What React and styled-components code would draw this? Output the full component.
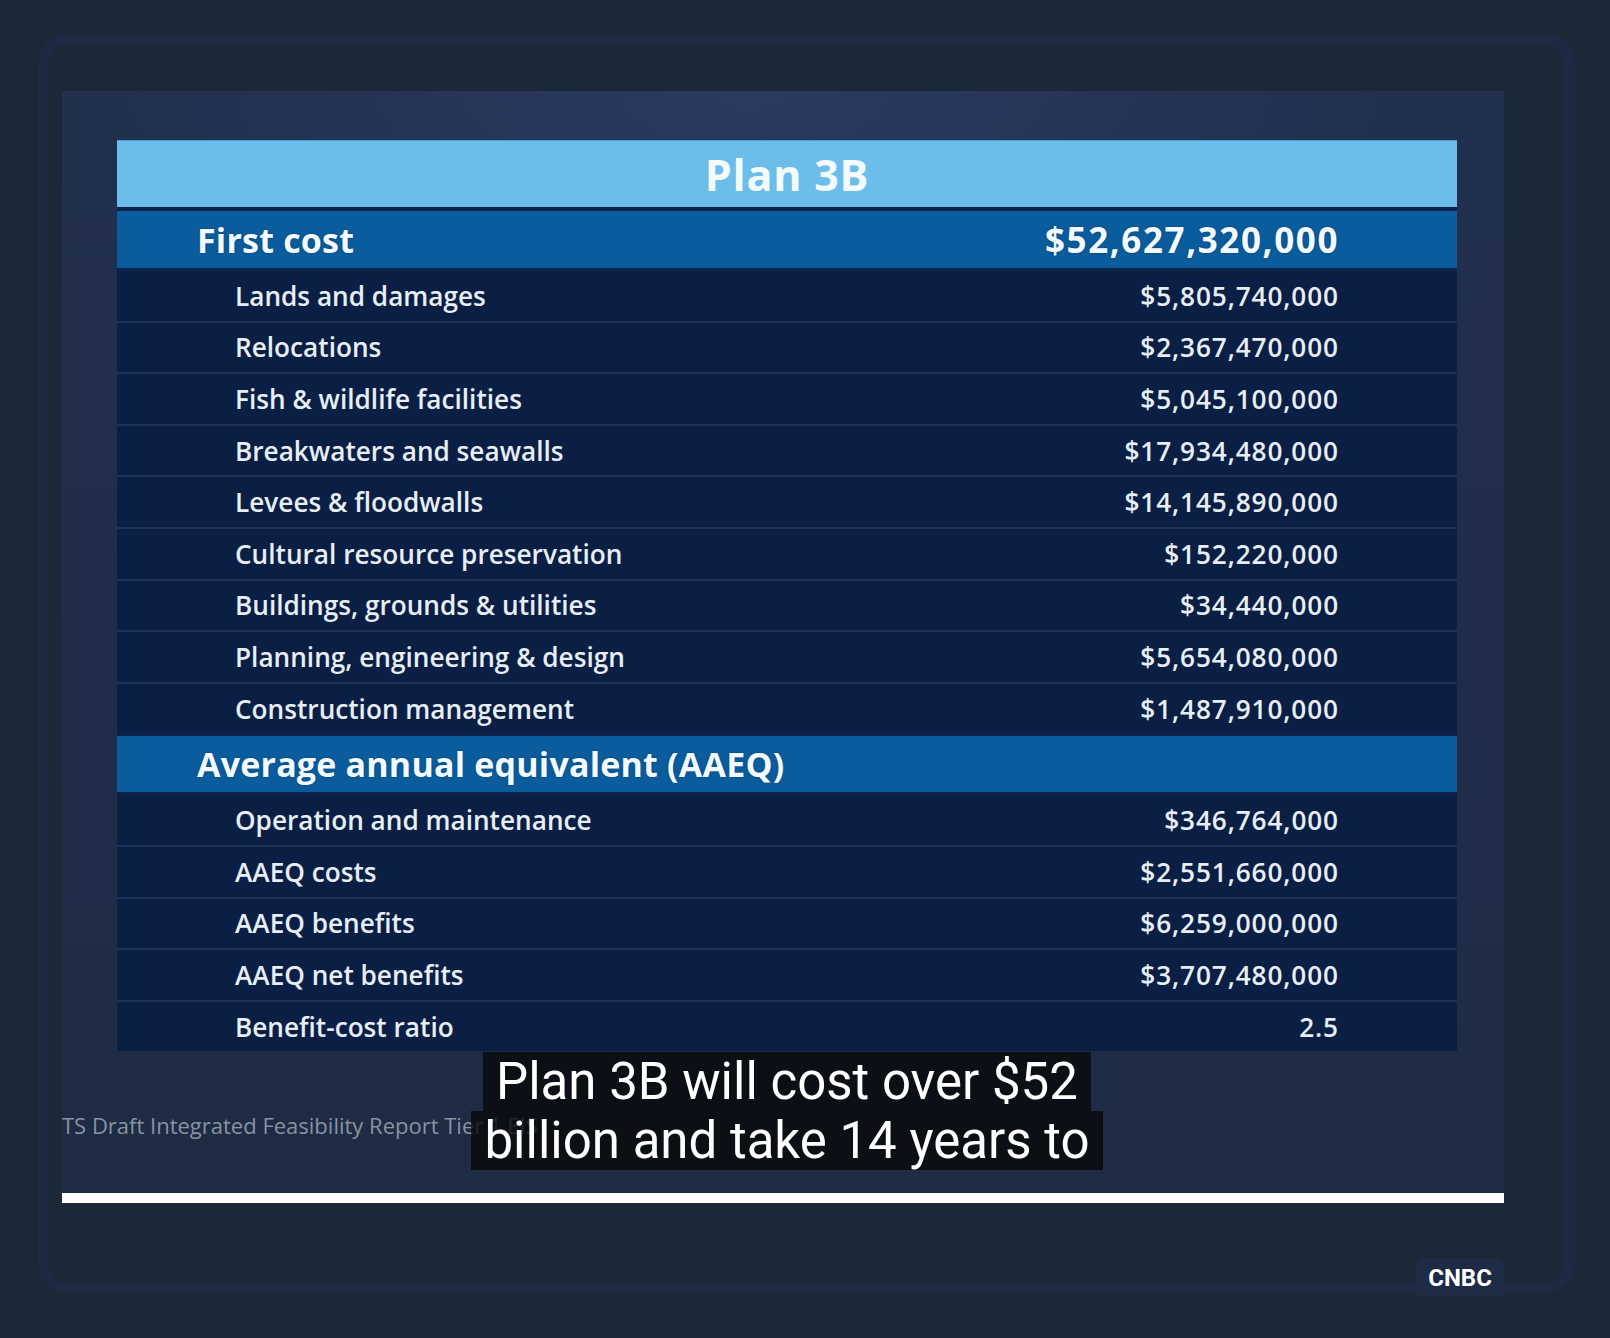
import React from "react";
import styled, { createGlobalStyle } from "styled-components";

const firstCostItems = [
  { label: "Lands and damages", value: "$5,805,740,000" },
  { label: "Relocations", value: "$2,367,470,000" },
  { label: "Fish & wildlife facilities", value: "$5,045,100,000" },
  { label: "Breakwaters and seawalls", value: "$17,934,480,000" },
  { label: "Levees & floodwalls", value: "$14,145,890,000" },
  { label: "Cultural resource preservation", value: "$152,220,000" },
  { label: "Buildings, grounds & utilities", value: "$34,440,000" },
  { label: "Planning, engineering & design", value: "$5,654,080,000" },
  { label: "Construction management", value: "$1,487,910,000" },
];

const aaeqItems = [
  { label: "Operation and maintenance", value: "$346,764,000" },
  { label: "AAEQ costs", value: "$2,551,660,000" },
  { label: "AAEQ benefits", value: "$6,259,000,000" },
  { label: "AAEQ net benefits", value: "$3,707,480,000" },
  { label: "Benefit-cost ratio", value: "2.5" },
];

const GlobalStyle = createGlobalStyle`
  html, body {
    margin: 0;
    padding: 0;
    background: #1b2838;
  }
  body {
    width: 1610px;
    height: 1338px;
    overflow: hidden;
    font-family: "Open Sans", "Noto Sans", sans-serif;
  }
`;

const Page = styled.div`
  padding: 34px 0 0 38px;
`;

const Card = styled.div`
  position: relative;
  box-sizing: border-box;
  width: 1537px;
  height: 1259px;
  border: 10px solid #1d2a43;
  border-radius: 30px;
  padding: 47px 0 0 14px;
`;

const Frame = styled.div`
  position: relative;
  box-sizing: border-box;
  width: 1442px;
  height: 1102px;
  overflow: hidden;
  padding: 49px 47px 0 55px;
  background:
    radial-gradient(ellipse 900px 500px at 48% 0%, rgba(48, 66, 110, 0.55), rgba(48, 66, 110, 0) 70%),
    linear-gradient(180deg, #22304f 0%, #1f2d4a 55%, #1d2b43 100%);
`;

const Table = styled.div`
  display: flex;
  flex-direction: column;
  background: #0c2449;
`;

const TitleBar = styled.div`
  height: 67px;
  display: flex;
  align-items: center;
  justify-content: center;
  background: #6cbde9;
  border-top: 1px solid #4d9bd0;
  box-sizing: border-box;
  color: #f4fbff;
  font-size: 43px;
  font-weight: 700;
  letter-spacing: 0.8px;
`;

const SectionRow = styled.div`
  height: ${(p) => p.$height}px;
  margin-top: ${(p) => p.$gap}px;
  display: flex;
  align-items: center;
  justify-content: space-between;
  padding: 0 118px 0 80px;
  background: #0a5c9c;
  color: #f3faff;
  font-size: 34px;
  font-weight: 700;
  letter-spacing: 0.2px;
  text-shadow: 0 0 2px rgba(0, 30, 70, 0.5);
`;

const SectionValue = styled.span`
  font-size: 35px;
  letter-spacing: 1.6px;
`;

const ItemList = styled.div`
  display: flex;
  flex-direction: column;
  margin-top: ${(p) => p.$gap}px;
  margin-bottom: ${(p) => p.$after}px;
`;

const ItemRow = styled.div`
  height: 49.6px;
  display: flex;
  align-items: center;
  justify-content: space-between;
  padding: 0 118px;
  background: #0b1e43;
  color: #e6eef6;
  font-size: 26.2px;
  font-weight: 600;
  & + & {
    border-top: 2px solid #1a3359;
  }
`;

const ItemValue = styled.span`
  letter-spacing: 0.9px;
`;

const Footnote = styled.div`
  margin: 59px 0 0 -55px;
  line-height: 30px;
  font-size: 22px;
  font-weight: 500;
  color: #8893a2;
  white-space: nowrap;
`;

const Captions = styled.div`
  position: absolute;
  top: 961px;
  left: 55px;
  right: 47px;
  display: flex;
  flex-direction: column;
  align-items: center;
`;

const CaptionLine = styled.span`
  display: block;
  padding: 0 13px;
  background: rgba(8, 8, 8, 0.78);
  color: #ffffff;
  font-family: Roboto, "Liberation Sans", sans-serif;
  font-size: 51px;
  line-height: 59px;
  white-space: nowrap;
`;

const Progress = styled.div`
  width: 1442px;
  height: 10px;
  background: #ffffff;
`;

const Badge = styled.div`
  position: absolute;
  right: 61px;
  bottom: -14px;
  width: 88px;
  height: 39px;
  display: flex;
  align-items: center;
  justify-content: center;
  border-radius: 8px;
  background: #1e2b44;
  color: #ffffff;
  font-family: Roboto, "Liberation Sans", sans-serif;
  font-size: 24px;
  font-weight: 700;
`;

const CostSection = ({ title, value, items, height, gap, after }) => (
  <>
    <SectionRow $height={height} $gap={gap}>
      <span>{title}</span>
      {value && <SectionValue>{value}</SectionValue>}
    </SectionRow>
    <ItemList $gap={3} $after={after}>
      {items.map((item) => (
        <ItemRow key={item.label}>
          <span>{item.label}</span>
          <ItemValue>{item.value}</ItemValue>
        </ItemRow>
      ))}
    </ItemList>
  </>
);

export default function App() {
  return (
    <>
      <GlobalStyle />
      <Page>
        <Card>
          <Frame>
            <Table>
              <TitleBar>Plan 3B</TitleBar>
              <CostSection
                title="First cost"
                value="$52,627,320,000"
                items={firstCostItems}
                height={57}
                gap={4}
                after={3}
              />
              <CostSection
                title="Average annual equivalent (AAEQ)"
                items={aaeqItems}
                height={56}
                gap={0}
                after={0}
              />
            </Table>
            <Footnote>TS Draft Integrated Feasibility Report Tier 1 EIS</Footnote>
            <Captions>
              <CaptionLine>Plan 3B will cost over $52</CaptionLine>
              <CaptionLine>billion and take 14 years to</CaptionLine>
            </Captions>
          </Frame>
          <Progress />
          <Badge>CNBC</Badge>
        </Card>
      </Page>
    </>
  );
}
